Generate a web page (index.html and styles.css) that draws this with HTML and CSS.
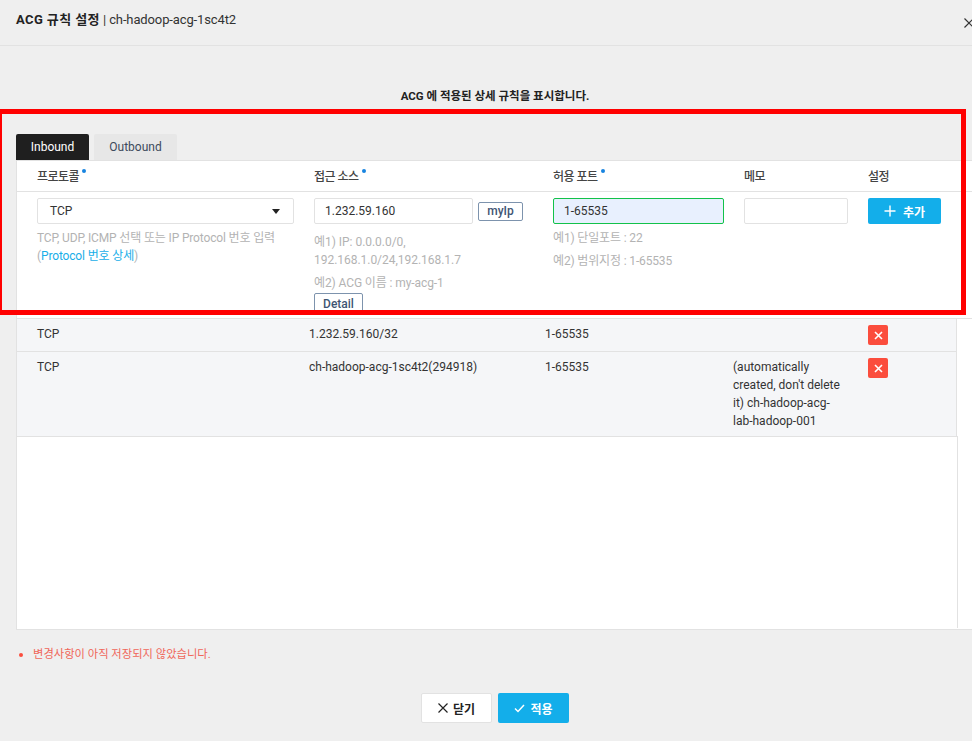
FILE: index.html
```html
<!DOCTYPE html>
<html lang="ko">
<head>
  <meta charset="UTF-8" />
  <title>ACG 규칙 설정</title>
  <link rel="stylesheet" href="styles.css">
</head>
<body>
  <header class="modal-head">
    <h1><b>ACG 규칙 설정</b> | ch-hadoop-acg-1sc4t2</h1>
    <svg class="close-icon" width="10" height="10" viewBox="0 0 10 10"><path d="M0.5 0.5L9.5 9.5M9.5 0.5L0.5 9.5" stroke="#333" stroke-width="1.2" fill="none"/></svg>
  </header>

  <p class="notice">ACG 에 적용된 상세 규칙을 표시합니다.</p>

  <div class="tabs">
    <div class="tab active">Inbound</div>
    <div class="tab">Outbound</div>
  </div>

  <section class="panel">
    <div class="cols head-row">
      <div class="req">프로토콜</div>
      <div class="req">접근 소스</div>
      <div class="req">허용 포트</div>
      <div>메모</div>
      <div>설정</div>
    </div>

    <div class="cols form-row">
      <div>
        <div class="field select">TCP<span class="caret"></span></div>
        <p class="help first">TCP, UDP, ICMP 선택 또는 IP Protocol 번호 입력<br>(<a>Protocol 번호 상세</a>)</p>
      </div>
      <div>
        <div class="source-line">
          <div class="field source">1.232.59.160</div>
          <button class="btn-line">myIp</button>
        </div>
        <p class="help second">예1) IP: 0.0.0.0/0,<br>192.168.1.0/24,192.168.1.7</p>
        <p class="help third">예2) ACG 이름 : my-acg-1</p>
        <button class="btn-line detail">Detail</button>
      </div>
      <div>
        <div class="field port">1-65535</div>
        <p class="help first">예1) 단일포트 : 22</p>
        <p class="help fourth">예2) 범위지정 : 1-65535</p>
      </div>
      <div>
        <div class="field memo"></div>
      </div>
      <div>
        <button class="btn-add">
          <svg width="12" height="12" viewBox="0 0 12 12"><path d="M6 0.5V11.5M0.5 6H11.5" stroke="#fff" stroke-width="1.4" fill="none"/></svg>
          추가
        </button>
      </div>
    </div>

    <div class="rules">
      <div class="rule one">
        <div>TCP</div>
        <div>1.232.59.160/32</div>
        <div>1-65535</div>
        <div></div>
        <div><span class="btn-del"><svg width="9" height="9" viewBox="0 0 9 9"><path d="M1 1L8 8M8 1L1 8" stroke="#fff" stroke-width="1.6" fill="none"/></svg></span></div>
      </div>
      <div class="rule two">
        <div>TCP</div>
        <div>ch-hadoop-acg-1sc4t2(294918)</div>
        <div>1-65535</div>
        <div class="memo-text">(automatically created, don't delete it) ch-hadoop-acg-lab-hadoop-001</div>
        <div><span class="btn-del"><svg width="9" height="9" viewBox="0 0 9 9"><path d="M1 1L8 8M8 1L1 8" stroke="#fff" stroke-width="1.6" fill="none"/></svg></span></div>
      </div>
    </div>
  </section>

  <p class="warning">변경사항이 아직 저장되지 않았습니다.</p>

  <footer class="actions">
    <button class="btn-close">
      <svg width="10" height="10" viewBox="0 0 10 10"><path d="M0.5 0.5L9.5 9.5M9.5 0.5L0.5 9.5" stroke="#222" stroke-width="1.2" fill="none"/></svg>
      닫기
    </button>
    <button class="btn-apply">
      <svg width="11" height="9" viewBox="0 0 11 9"><path d="M1 4.5L4 7.5L10 1" stroke="#fff" stroke-width="1.5" fill="none"/></svg>
      적용
    </button>
  </footer>

  <!-- annotation drawn on top of the screenshot -->
  <div class="highlight"></div>
</body>
</html>
```

FILE: styles.css
```css
* {
  box-sizing: border-box;
  padding: 0;
  margin: 0;
}

html,
body {
  height: 741px;
  overflow: hidden;
}

body {
  position: relative;
  background: #efefef;
  color: #333;
  font-family: Roboto, "Noto Sans CJK KR", sans-serif;
  font-size: 12px;
  line-height: 18px;
}

button {
  font-family: inherit;
  cursor: pointer;
}

.modal-head {
  display: flex;
  justify-content: space-between;
  align-items: center;
  height: 46px;
  padding: 0 0 6px 16px;
  border-bottom: 1px solid #e2e2e2;
}

.modal-head h1 {
  font-size: 13px;
  font-weight: 400;
  letter-spacing: -0.12px;
}

.modal-head b {
  font-weight: 700;
  color: #222;
  letter-spacing: 0.4px;
}

.close-icon {
  flex: none;
  margin-top: 6px;
  margin-right: -2px;
}

.notice {
  margin-top: 41px;
  padding-left: 18px;
  text-align: center;
  font-size: 11.5px;
  font-weight: 700;
  color: #222;
}

.tabs {
  display: flex;
  gap: 5px;
  margin: 29px 0 0 16px;
}

.tab {
  width: 83px;
  height: 26px;
  line-height: 26px;
  text-align: center;
  background: #e7e7e7;
  color: #3d4a5c;
  border-radius: 2px 2px 0 0;
}

.tab.active {
  width: 73px;
  background: #1f1f1f;
  color: #fff;
}

.panel {
  margin: 0 -30px 0 16px;
  height: 470px;
  background: #fff;
  border: 1px solid #e2e2e2;
  border-right: 0;
}

.cols {
  display: grid;
  grid-template-columns: 277px 239px 191px 124px 1fr;
  padding-left: 20px;
}

.head-row {
  height: 31px;
  line-height: 32px;
  border-bottom: 1px solid #e2e2e2;
  font-weight: 500;
  color: #444;
  letter-spacing: -0.5px;
}

.req::after {
  content: "";
  display: inline-block;
  width: 4px;
  height: 4px;
  margin-left: 3px;
  vertical-align: 8px;
  border-radius: 50%;
  background: #1784e0;
}

.form-row {
  height: 127px;
  padding-top: 6px;
  border-bottom: 1px solid #e2e2e2;
  overflow: hidden;
}

.field {
  height: 26px;
  line-height: 24px;
  background: #fff;
  border: 1px solid #e2e2e2;
  border-radius: 2px;
  color: #333;
}

.select {
  position: relative;
  width: 257px;
  padding-left: 12px;
}

.caret {
  position: absolute;
  top: 10px;
  right: 13px;
  border-top: 5px solid #222;
  border-left: 4px solid transparent;
  border-right: 4px solid transparent;
}

.source-line {
  display: flex;
  align-items: center;
  gap: 5px;
}

.source {
  width: 159px;
  padding-left: 10px;
}

.port {
  width: 171px;
  padding-left: 10px;
  background: #e8f0fe;
  border-color: #12c24a;
}

.memo {
  width: 104px;
}

.btn-line {
  height: 19px;
  background: #fff;
  border: 1px solid #7d93ad;
  border-radius: 2px;
  color: #3f5573;
  font-size: 12px;
  font-weight: 500;
}

.source-line .btn-line {
  width: 45px;
}

.detail {
  display: block;
  width: 49px;
  margin-top: 1px;
  height: 22px;
}

.help {
  color: #b3b3b3;
  letter-spacing: -0.15px;
}

.help a {
  color: #18aee8;
}

.help.first {
  margin-top: 5px;
}

.help.second {
  margin-top: 9px;
  letter-spacing: -0.03px;
}

.help.third {
  margin-top: 5px;
  letter-spacing: -0.1px;
}

.help.fourth {
  margin-top: 5px;
}

.btn-add {
  display: flex;
  align-items: center;
  justify-content: center;
  gap: 7px;
  width: 73px;
  height: 26px;
  border: 0;
  border-radius: 2px;
  background: #13aeea;
  color: #fff;
  font-size: 12px;
  font-weight: 700;
}

.rules {
  width: 940px;
  background: #fff;
}

.rule {
  display: grid;
  grid-template-columns: 272px 236px 188px 135px 1fr;
  padding-left: 20px;
  background: #f5f6f8;
  border-bottom: 1px solid #e2e2e2;
  border-right: 1px solid #e2e2e2;
}

.rule.one {
  height: 33px;
  padding-top: 6px;
}

.rule.two {
  height: 85px;
  padding-top: 6px;
}

.memo-text {
  width: 110px;
}

.btn-del {
  display: flex;
  align-items: center;
  justify-content: center;
  width: 20px;
  height: 20px;
  border-radius: 2px;
  background: #fb4d3d;
}

.panel::after {
  content: "";
  display: block;
  width: 940px;
  height: 192px;
  margin-top: -1px;
  border-right: 1px solid #e2e2e2;
}

.warning {
  position: relative;
  margin: 16px 0 0 33px;
  font-size: 11.3px;
  color: #f0665a;
}

.warning::before {
  content: "";
  position: absolute;
  top: 7px;
  left: -14px;
  width: 4px;
  height: 4px;
  border-radius: 50%;
  background: #fb4d3d;
}

.actions {
  display: flex;
  justify-content: center;
  gap: 6px;
  margin-top: 29px;
  padding-left: 18px;
}

.btn-close,
.btn-apply {
  display: flex;
  align-items: center;
  justify-content: center;
  gap: 5px;
  width: 71px;
  height: 30px;
  border-radius: 2px;
  font-size: 12px;
  font-weight: 700;
}

.btn-close {
  background: #fff;
  border: 1px solid #e2e2e2;
  color: #222;
}

.btn-apply {
  background: #13aeea;
  border: 0;
  color: #fff;
}

.highlight {
  position: absolute;
  top: 109px;
  left: -3px;
  width: 969px;
  height: 206px;
  border: 5px solid #ff0000;
  pointer-events: none;
}
```
